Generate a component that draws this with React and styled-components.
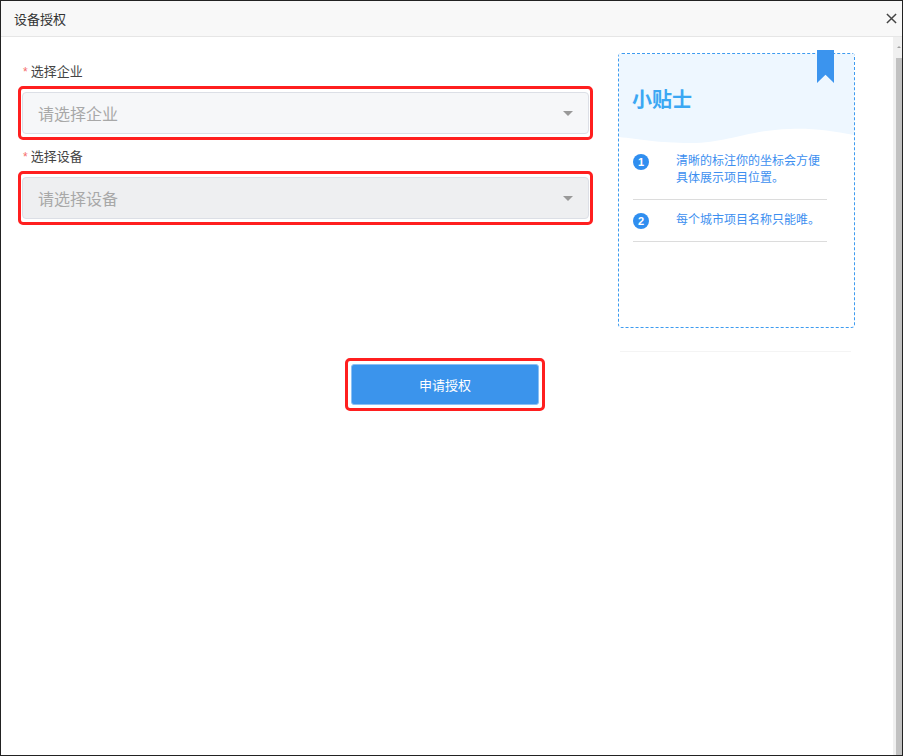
import React from "react";
import styled, { createGlobalStyle } from "styled-components";

const GlobalStyle = createGlobalStyle`
  html, body {
    margin: 0;
    padding: 0;
    height: 100%;
    background: #fff;
  }
  body {
    font-family: "Liberation Sans", "Noto Sans CJK SC", sans-serif;
    color: #333;
  }
  * {
    box-sizing: border-box;
  }
`;

const tips = ["清晰的标注你的坐标会方便具体展示项目位置。", "每个城市项目名称只能唯。"];

export default function App() {
  return (
    <Window>
      <GlobalStyle />
      <TitleBar>
        <span>设备授权</span>
        <CloseIcon viewBox="0 0 12 12">
          <path d="M1 1 L11 11 M11 1 L1 11" />
        </CloseIcon>
      </TitleBar>

      <Body>
        <Content>
          <TopRow>
            <Form>
              <Label>
                <Required>*</Required>选择企业
              </Label>
              <Highlight>
                <Select>
                  <Placeholder>请选择企业</Placeholder>
                  <Caret />
                </Select>
              </Highlight>

              <Label $gap>
                <Required>*</Required>选择设备
              </Label>
              <Highlight>
                <Select $disabled>
                  <Placeholder>请选择设备</Placeholder>
                  <Caret />
                </Select>
              </Highlight>
            </Form>

            <Aside>
              <TipCard>
                <Bookmark />
                <TipHeader>
                  <TipTitle>小贴士</TipTitle>
                </TipHeader>
                <Wave viewBox="0 0 237 16" preserveAspectRatio="none">
                  <path d="M0 0 H237 V7 C215 3 195 0 172 1 C130 2 110 15 72 15 C40 15 20 11 0 9 Z" />
                </Wave>
                <TipList>
                  {tips.map((tip, i) => (
                    <TipItem key={i}>
                      <TipNum>{i + 1}</TipNum>
                      <TipText>{tip}</TipText>
                    </TipItem>
                  ))}
                </TipList>
              </TipCard>
              <FaintLine />
            </Aside>
          </TopRow>

          <ButtonRow>
            <Highlight $button>
              <SubmitButton>申请授权</SubmitButton>
            </Highlight>
          </ButtonRow>
        </Content>

        <ScrollRail>
          <ScrollUp />
          <ScrollThumb />
        </ScrollRail>
      </Body>
    </Window>
  );
}

const Window = styled.div`
  height: 100vh;
  border: 1px solid #222;
  display: flex;
  flex-direction: column;
  overflow: hidden;
`;

const TitleBar = styled.div`
  height: 36px;
  flex: none;
  display: flex;
  align-items: center;
  justify-content: space-between;
  padding: 0 5px 0 13px;
  background: #f8f8f8;
  border-bottom: 1px solid #e6e6e6;
  font-size: 13px;
  color: #333;
`;

const CloseIcon = styled.svg`
  width: 11px;
  height: 11px;
  fill: none;
  stroke: #444;
  stroke-width: 1.6;
`;

const Body = styled.div`
  flex: 1;
  display: flex;
  min-height: 0;
`;

const Content = styled.div`
  flex: 1;
  min-width: 0;
`;

const ScrollRail = styled.div`
  width: 9px;
  flex: none;
  display: flex;
  flex-direction: column;
  background: #f0f0f0;
`;

const ScrollUp = styled.div`
  height: 21px;
  flex: none;
  position: relative;

  &::after {
    content: "";
    position: absolute;
    right: 1px;
    top: 9px;
    border-left: 2px solid transparent;
    border-right: 2px solid transparent;
    border-bottom: 2px solid #a0a0a0;
  }
`;

const ScrollThumb = styled.div`
  flex: 1;
  margin-left: 3px;
  background: #c1c1c1;
`;

const TopRow = styled.div`
  display: flex;
  align-items: flex-start;
`;

const Form = styled.div`
  width: 575px;
  margin-left: 17px;
  padding-top: 26px;
`;

const Label = styled.div`
  height: 18px;
  line-height: 18px;
  font-size: 13px;
  color: #444;
  padding-left: 5px;
  margin-top: ${(p) => (p.$gap ? "8px" : "0")};
  margin-bottom: 5px;
`;

const Required = styled.span`
  color: #f56c6c;
  font-size: 12px;
  margin-right: 3px;
`;

const Highlight = styled.div`
  border: 3px solid #ff1f1f;
  border-radius: 5px;
  padding: ${(p) => (p.$button ? "3px" : "3px 1px")};
  display: ${(p) => (p.$button ? "inline-block" : "block")};
`;

const Select = styled.div`
  height: 42px;
  display: flex;
  align-items: center;
  justify-content: space-between;
  padding: 0 15px 0 15px;
  background: ${(p) => (p.$disabled ? "#eeeff1" : "#f6f7f9")};
  border: 1px solid #dcdfe6;
  border-radius: 4px;
`;

const Placeholder = styled.span`
  font-size: 16px;
  color: #a8a8a8;
`;

const Caret = styled.span`
  width: 0;
  height: 0;
  border-left: 5px solid transparent;
  border-right: 5px solid transparent;
  border-top: 5px solid #999;
`;

const Aside = styled.div`
  width: 237px;
  margin-left: 25px;
  margin-top: 16px;
`;

const TipCard = styled.div`
  position: relative;
  height: 275px;
  border: 1px dashed #3d9bf0;
  border-radius: 4px;
`;

const Bookmark = styled.span`
  position: absolute;
  top: -4px;
  right: 20px;
  width: 17px;
  height: 33px;
  background: #3b94ee;
  clip-path: polygon(0 0, 100% 0, 100% 100%, 50% 75%, 0 100%);
`;

const TipHeader = styled.div`
  height: 74px;
  padding: 33px 0 0 13px;
  background: #eef7ff;
`;

const TipTitle = styled.div`
  font-size: 20px;
  font-weight: bold;
  line-height: 26px;
  color: #3ba7f3;
`;

const Wave = styled.svg`
  display: block;
  width: 100%;
  height: 16px;
  fill: #eef7ff;
`;

const TipList = styled.div`
  padding: 0 27px 0 14px;
  margin-top: -3px;
`;

const TipItem = styled.div`
  display: flex;
  align-items: flex-start;
  padding: 12px 0 12px;
  border-bottom: 1px solid #dcdcdc;
`;

const TipNum = styled.span`
  flex: none;
  width: 16px;
  height: 16px;
  margin-top: 1px;
  border-radius: 50%;
  background: #2f8ef0;
  color: #fff;
  font-size: 11px;
  font-weight: bold;
  line-height: 16px;
  text-align: center;
`;

const TipText = styled.div`
  margin-left: 27px;
  font-size: 12px;
  line-height: 17px;
  color: #3d8ff0;
`;

const FaintLine = styled.div`
  height: 1px;
  margin: 23px 4px 0 2px;
  background: #f4f4f4;
`;

const ButtonRow = styled.div`
  display: flex;
  justify-content: center;
  margin-top: 6px;
  padding-right: 4px;
`;

const SubmitButton = styled.button`
  width: 188px;
  height: 41px;
  border: 1px solid #8cc0f4;
  border-radius: 3px;
  background: #3b94ec;
  color: #fff;
  font-family: inherit;
  font-size: 13px;
  cursor: pointer;
`;
